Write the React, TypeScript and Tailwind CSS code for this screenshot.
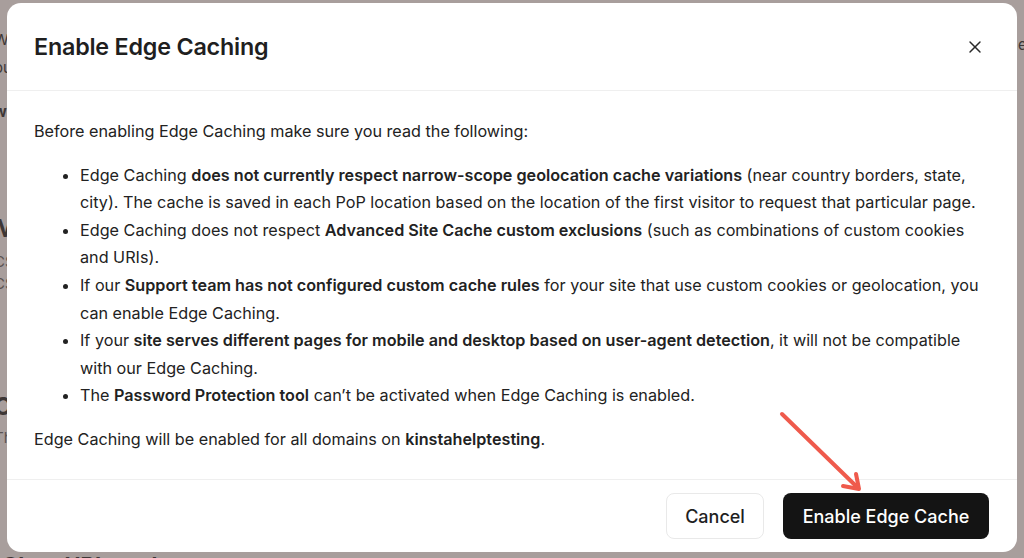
import { X } from "lucide-react";

const font = { fontFamily: "Inter, 'Noto Sans', sans-serif" };

const BackgroundPage = () => (
  <div className="flex h-[558px] justify-between overflow-hidden bg-[#a89e9c] text-[#3d3736]">
    <div className="-ml-[6px] flex flex-col">
      <p className="mt-[30px] text-[15px] leading-[20px]">Want faster pages?</p>
      <p className="mt-[8px] text-[15px] leading-[20px]">ou can enable it here</p>
      <p className="mt-[24px] text-[15px] font-bold leading-[20px]">w</p>
      <p className="mt-[92px] text-[24px] font-bold leading-[30px]">Minify</p>
      <p className="mt-[8px] text-[15px] leading-[20px] text-[#5a5352]">CSS</p>
      <p className="mt-[2px] text-[15px] leading-[20px] text-[#5a5352]">CSS</p>
      <p className="mt-[98px] text-[24px] font-bold leading-[30px]">Cache</p>
      <p className="mt-[6px] text-[15px] leading-[20px] text-[#5a5352]">The cache</p>
      <p className="mt-[102px] pl-[8px] text-[22px] font-bold leading-[30px]">Clear URL cache</p>
    </div>
    <div className="w-[6px] shrink-0 overflow-hidden pt-[35px]">
      <p className="text-[15px] leading-[20px]">enabled</p>
    </div>
  </div>
);

const Arrow = () => (
  <svg
    className="absolute left-0 top-0"
    width="1024"
    height="558"
    viewBox="0 0 1024 558"
    fill="none"
  >
    <path
      d="M782 414 L856 486"
      stroke="#ef5a4c"
      strokeWidth="4"
      strokeLinecap="round"
    />
    <path
      d="M843 486 L859 489 L856 474"
      stroke="#ef5a4c"
      strokeWidth="4"
      strokeLinecap="round"
      strokeLinejoin="round"
    />
  </svg>
);

export default function App() {
  return (
    <div className="relative h-[558px] w-[1024px] overflow-hidden" style={font}>
      <BackgroundPage />

      <div className="absolute left-[7px] top-[3px] flex h-[549px] w-[1010px] flex-col rounded-[14px] bg-white text-[#222222]">
        {/* Header */}
        <div className="flex h-[88px] shrink-0 items-center justify-between border-b border-[#efefef] pl-[27px] pr-[26px]">
          <h2 className="text-[23.3px] font-semibold leading-[28px] tracking-[-0.2px] text-[#1f1f1f]">
            Enable Edge Caching
          </h2>
          <button className="flex h-[32px] w-[32px] items-center justify-center text-[#2a2a2a]">
            <X size={20} strokeWidth={1.75} />
          </button>
        </div>

        {/* Body */}
        <div className="flex-1 px-[27px] pt-[27px] text-[16.2px] leading-[27.6px]">
          <p>Before enabling Edge Caching make sure you read the following:</p>

          <ul className="mt-[16px] list-disc pl-[46px]">
            <li>
              Edge Caching{" "}
              <strong className="font-semibold">
                does not currently respect narrow-scope geolocation cache variations
              </strong>{" "}
              (near country borders, state, city). The cache is saved in each PoP location
              based on the location of the first visitor to request that particular page.
            </li>
            <li>
              Edge Caching does not respect{" "}
              <strong className="font-semibold">Advanced Site Cache custom exclusions</strong>{" "}
              (such as combinations of custom cookies and URIs).
            </li>
            <li>
              If our{" "}
              <strong className="font-semibold">
                Support team has not configured custom cache rules
              </strong>{" "}
              for your site that use custom cookies or geolocation, you can enable Edge Caching.
            </li>
            <li>
              If your{" "}
              <strong className="font-semibold">
                site serves different pages for mobile and desktop based on user-agent detection
              </strong>
              , it will not be compatible with our Edge Caching.
            </li>
            <li>
              The <strong className="font-semibold">Password Protection tool</strong> can’t be
              activated when Edge Caching is enabled.
            </li>
          </ul>

          <p className="mt-[16px]">
            Edge Caching will be enabled for all domains on{" "}
            <strong className="font-semibold">kinstahelptesting</strong>.
          </p>
        </div>

        {/* Footer */}
        <div className="flex h-[73px] shrink-0 items-center justify-end gap-[19px] border-t border-[#efefef] pr-[28px]">
          <button className="h-[46px] w-[98px] rounded-[8px] border border-[#e9e9e9] bg-white text-[18px] font-medium text-[#1f1f1f]">
            Cancel
          </button>
          <button className="h-[46px] w-[206px] rounded-[8px] bg-[#141414] text-[18px] font-medium text-white">
            Enable Edge Cache
          </button>
        </div>
      </div>

      <Arrow />
    </div>
  );
}
